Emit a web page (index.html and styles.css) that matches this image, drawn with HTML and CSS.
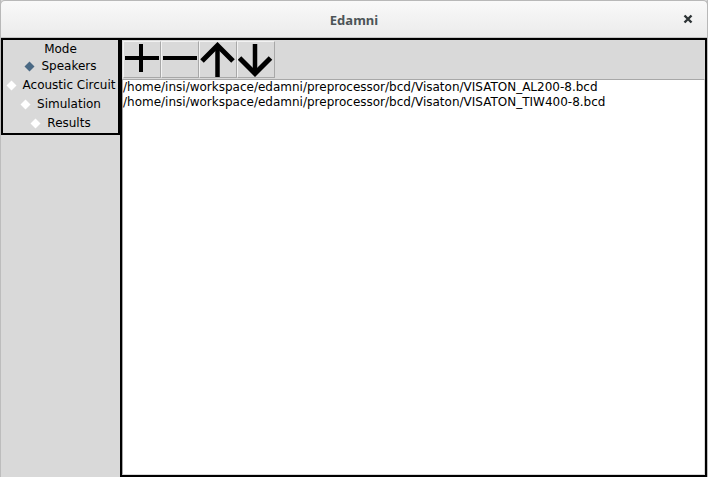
FILE: index.html
```html
<!DOCTYPE html>
<html>
<head>
<meta charset="utf-8">
<title>Edamni</title>
<link rel="stylesheet" href="styles.css">
</head>
<body>
<div class="window">
  <div class="titlebar">
    <span class="title">Edamni</span>
    <span class="close">
      <svg width="10" height="10" viewBox="0 0 10 10"><path d="M1.5 1.5 L8.5 8.5 M8.5 1.5 L1.5 8.5" stroke="#2e3436" stroke-width="2.4" fill="none"/></svg>
    </span>
  </div>
  <div class="content">
    <div class="side">
      <div class="modebox">
        <div class="modelabel">Mode</div>
        <div class="radio"><svg class="dia" width="11" height="11" viewBox="0 0 11 11"><polygon points="5.5,0.5 10.5,5.5 5.5,10.5 0.5,5.5" fill="#4a6984"/></svg><span>Speakers</span></div>
        <div class="radio"><svg class="dia" width="11" height="11" viewBox="0 0 11 11"><polygon points="5.5,0.5 10.5,5.5 5.5,10.5 0.5,5.5" fill="#ffffff"/></svg><span>Acoustic Circuit</span></div>
        <div class="radio"><svg class="dia" width="11" height="11" viewBox="0 0 11 11"><polygon points="5.5,0.5 10.5,5.5 5.5,10.5 0.5,5.5" fill="#ffffff"/></svg><span>Simulation</span></div>
        <div class="radio"><svg class="dia" width="11" height="11" viewBox="0 0 11 11"><polygon points="5.5,0.5 10.5,5.5 5.5,10.5 0.5,5.5" fill="#ffffff"/></svg><span>Results</span></div>
      </div>
    </div>
    <div class="main">
      <div class="toolbar">
        <div class="tbtn"><svg width="36" height="35" viewBox="0 0 36 35"><rect x="1" y="14" width="34" height="4" fill="#000"/><rect x="15" y="2" width="4" height="28" fill="#000"/></svg></div>
        <div class="tbtn"><svg width="36" height="35" viewBox="0 0 36 35"><rect x="1" y="14" width="34" height="4" fill="#000"/></svg></div>
        <div class="tbtn"><svg width="36" height="35" viewBox="0 0 36 35"><path d="M17.5 5 L17.5 35" stroke="#000" stroke-width="4.5" fill="none"/><path d="M2 19 L17.5 3.5 L33 19" stroke="#000" stroke-width="5" fill="none" stroke-linejoin="miter"/></svg></div>
        <div class="tbtn"><svg width="36" height="35" viewBox="0 0 36 35"><path d="M17 2 L17 32" stroke="#000" stroke-width="4.5" fill="none"/><path d="M1.5 16 L17 31.5 L32.5 16" stroke="#000" stroke-width="5" fill="none" stroke-linejoin="miter"/></svg></div>
      </div>
      <div class="list">
        <div class="item">/home/insi/workspace/edamni/preprocessor/bcd/Visaton/VISATON_AL200-8.bcd</div>
        <div class="item">/home/insi/workspace/edamni/preprocessor/bcd/Visaton/VISATON_TIW400-8.bcd</div>
      </div>
    </div>
  </div>
</div>
</body>
</html>
```
FILE: styles.css
```css
html, body {
  margin: 0;
  padding: 0;
  background: #d9d9d9;
}
body {
  width: 708px;
  height: 477px;
  overflow: hidden;
}
.window {
  width: 708px;
  height: 477px;
  display: flex;
  flex-direction: column;
  box-sizing: border-box;
  border-left: 1px solid #bdbdbd;
  border-right: 1px solid #bdbdbd;
}
.titlebar {
  height: 38px;
  flex: none;
  box-sizing: border-box;
  margin: 0 -1px;
  border: 1px solid #b8b8b8;
  border-bottom: 1px solid #c4c4c4;
  border-radius: 5px 5px 0 0;
  background: linear-gradient(#f9f9f9, #ebebeb);
  position: relative;
  display: flex;
  align-items: center;
  justify-content: center;
}
.title {
  font-family: "Noto Sans", "DejaVu Sans", sans-serif;
  font-weight: bold;
  font-size: 13px;
  color: #4c5457;
  margin-top: 1px;
}
.close {
  position: absolute;
  left: 682px;
  top: 13px;
  width: 10px;
  height: 10px;
  display: flex;
}
.content {
  flex: 1;
  display: flex;
  min-height: 0;
  background: #d9d9d9;
}
.side {
  width: 119px;
  flex: none;
}
.modebox {
  box-sizing: border-box;
  width: 119px;
  border: 2px solid #000;
  padding-top: 1px;
  font-family: "DejaVu Sans", sans-serif;
  font-size: 12px;
  color: #000;
}
.modelabel {
  height: 16px;
  line-height: 16px;
  text-align: center;
}
.radio {
  height: 19px;
  display: flex;
  align-items: center;
  justify-content: center;
  line-height: 19px;
}
.dia {
  margin-right: 6px;
  flex: none;
}
.main {
  flex: 1;
  display: flex;
  flex-direction: column;
  box-sizing: border-box;
  border: 2px solid #000;
  min-width: 0;
}
.toolbar {
  display: flex;
  padding: 1px 0 1px 1px;
  flex: none;
}
.tbtn {
  width: 38px;
  height: 37px;
  box-sizing: border-box;
  border: 1px solid;
  border-color: #f2f2f2 #a8a8a8 #a8a8a8 #f2f2f2;
  background: #d9d9d9;
  display: flex;
}
.list {
  flex: 1;
  background: #fff;
  border: 1px solid #a8a8a8;
  border-right-color: #d9d9d9;
  border-bottom-color: #d9d9d9;
  font-family: "DejaVu Sans", sans-serif;
  font-size: 12px;
  color: #000;
  line-height: 15px;
}
.item {
  white-space: nowrap;
  height: 15px;
}
```
